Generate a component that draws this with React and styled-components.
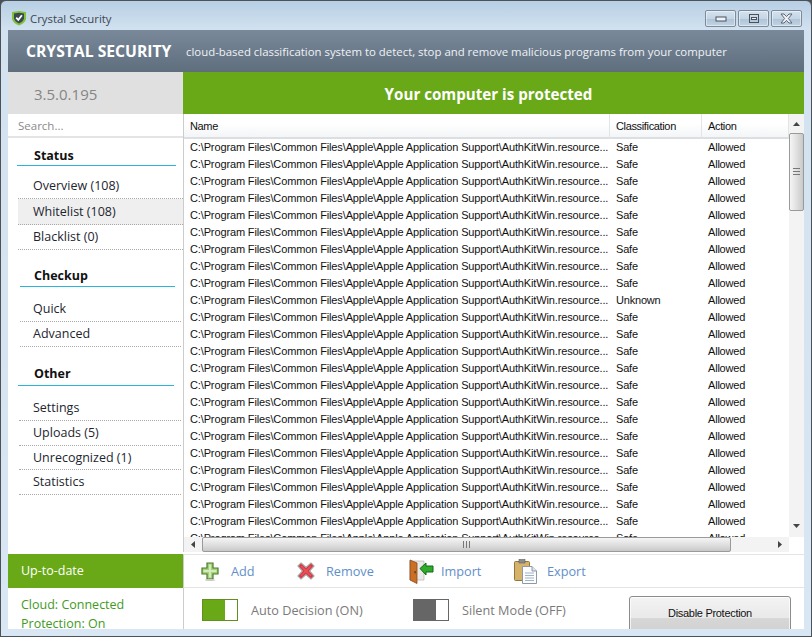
import React from 'react';
import styled, { createGlobalStyle } from 'styled-components';

const GlobalStyle = createGlobalStyle`
  html, body {
    margin: 0;
    padding: 0;
    background: #4a4f55;
  }
  * { box-sizing: border-box; }
`;

const uiFont = `"Open Sans", "Noto Sans", sans-serif`;
const listFont = `"Liberation Sans", Arial, sans-serif`;

const Window = styled.div`
  width: 812px;
  height: 637px;
  border: 1px solid #4d5257;
  border-radius: 6px 6px 0 0;
  background: linear-gradient(#b7cfe4 0, #d3e2f0 30px, #d9e6f3 100%);
  padding: 0 7px 7px;
  display: flex;
  flex-direction: column;
  overflow: hidden;
`;

const TitleBar = styled.div`
  height: 29px;
  flex: none;
  display: flex;
  align-items: center;
  padding: 5px 2px 0 3px;
  font: 11.4px ${uiFont};
  color: #3c4650;
`;

const TitleText = styled.span`
  margin-left: 3px;
  flex: 1;
`;

const WinButtons = styled.div`
  display: flex;
  gap: 2px;
  align-self: flex-start;
  margin-top: 4px;
`;

const WinButton = styled.div`
  width: ${p => p.$w}px;
  height: 17px;
  border: 1px solid #7d8b99;
  border-radius: 2px;
  background: linear-gradient(#d5e2ee 0, #c4d5e5 50%, #aec3d7 51%, #c1d4e5 100%);
  box-shadow: inset 0 0 0 1px rgba(255, 255, 255, .45);
  display: flex;
  align-items: center;
  justify-content: center;
`;

const Client = styled.div`
  height: 599px;
  background: #fff;
  display: flex;
  flex-direction: column;
  overflow: hidden;
`;

const Header = styled.div`
  height: 42px;
  flex: none;
  background: linear-gradient(#79899a, #5f6e7d);
  color: #fff;
  display: flex;
  align-items: center;
  padding: 0 0 0 18px;
  font-family: ${uiFont};
`;

const Brand = styled.div`
  font-size: 15.7px;
  font-weight: 700;
  width: 160px;
  white-space: nowrap;
`;

const Tagline = styled.div`
  font-size: 11.4px;
  color: #eef2f5;
  white-space: nowrap;
`;

const Body = styled.div`
  flex: 1;
  min-height: 0;
  display: grid;
  grid-template-columns: 175px 1fr;
`;

const Sidebar = styled.div`
  display: flex;
  flex-direction: column;
  font-family: ${uiFont};
  min-height: 0;
  overflow: hidden;
`;

const Version = styled.div`
  height: 42px;
  flex: none;
  background: #e0e0e0;
  color: #858585;
  font-size: 15px;
  line-height: 44px;
  padding-left: 26px;
`;

const Search = styled.div`
  height: 24px;
  flex: none;
  border-bottom: 2px solid #e4e4e4;
  color: #8a8a8a;
  font-size: 11.5px;
  line-height: 23px;
  padding-left: 10px;
`;

const Nav = styled.div`
  flex: 1;
`;

const SectionTitle = styled.div`
  box-sizing: content-box;
  height: ${p => p.$h - p.$top}px;
  margin: 0 ${p => p.$right}px 0 ${p => p.$left}px;
  padding: ${p => p.$top}px 0 0 ${p => 26 - p.$left}px;
  border-bottom: 1px solid #2cb5dc;
  font-size: 12.5px;
  font-weight: 700;
  line-height: 19px;
  color: #111;
`;

const ItemList = styled.div`
  margin: ${p => p.$gap}px ${p => p.$right}px 0 ${p => p.$left}px;
`;

const Item = styled.div`
  height: ${p => p.$h}px;
  padding-left: ${p => 25 - p.$left}px;
  border-bottom: 1px dotted #aaa;
  background: ${p => (p.$active ? '#efefef' : 'transparent')};
  color: #1d2530;
  font-size: 12.5px;
  line-height: ${p => p.$h - 1}px;
  white-space: nowrap;
`;

const UpToDate = styled.div`
  height: 34px;
  flex: none;
  background: #69a918;
  color: #fff;
  font-size: 12.5px;
  line-height: 34px;
  padding-left: 13px;
`;

const Cloud = styled.div`
  height: 41px;
  flex: none;
  overflow: hidden;
  padding: 7px 0 0 13px;
  color: #3f9a1e;
  font-size: 12.5px;
  line-height: 19px;
  white-space: nowrap;
`;

const Main = styled.div`
  display: flex;
  flex-direction: column;
  min-width: 0;
  min-height: 0;
`;

const Banner = styled.div`
  height: 42px;
  flex: none;
  background: #69a918;
  color: #fff;
  font: 700 15.15px/45px ${uiFont};
  text-align: center;
  padding-right: 10px;
`;

const ListArea = styled.div`
  flex: none;
  height: 438px;
  display: grid;
  grid-template-columns: 605px 15px;
  grid-template-rows: 423px 15px;
  border-left: 1px solid #ccc;
`;

const ListClip = styled.div`
  overflow: hidden;
  font: 11px ${listFont};
  color: #111;
`;

const Columns = styled.div`
  display: grid;
  grid-template-columns: 426px 92px 87px;
`;

const HeadRow = styled(Columns)`
  height: 25px;
  background: linear-gradient(#fff 0, #fff 40%, #f3f5f7 100%);
  border-bottom: 2px solid #dcdfe2;
  line-height: 24px;
  letter-spacing: -0.35px;
`;

const HeadCell = styled.div`
  padding-left: 6px;
  border-right: 1px solid #e2e4e6;
`;

const Row = styled(Columns)`
  height: 17px;
  line-height: 17px;
  white-space: nowrap;
`;

const Cell = styled.div`
  padding-left: 6px;
  overflow: hidden;
  letter-spacing: ${p => (p.$path ? '-0.13px' : '-0.2px')};
`;

const VBar = styled.div`
  grid-row: 1;
  grid-column: 2;
  background: #f3f3f3;
  display: flex;
  flex-direction: column;
  align-items: center;
`;

const HBar = styled.div`
  grid-row: 2;
  grid-column: 1;
  background: #f3f3f3;
  display: flex;
  align-items: center;
`;

const Corner = styled.div`
  grid-row: 2;
  grid-column: 2;
  background: #fff;
`;

const ArrowBox = styled.div`
  flex: none;
  width: ${p => p.$w}px;
  height: ${p => p.$h}px;
  display: flex;
  align-items: center;
  justify-content: center;
`;

const Thumb = styled.div`
  flex: none;
  width: ${p => p.$w}px;
  height: ${p => p.$h}px;
  border: 1px solid #9a9a9a;
  border-radius: 2px;
  display: flex;
  align-items: center;
  justify-content: center;
  background: ${p => (p.$vertical
    ? 'linear-gradient(90deg, #f5f5f5, #dedede 55%, #c9c9c9)'
    : 'linear-gradient(#f5f5f5, #dedede 55%, #c9c9c9)')};
`;

const BarSpacer = styled.div`
  flex: 1;
`;

const Toolbar = styled.div`
  height: 34px;
  flex: none;
  margin-top: 2px;
  border-top: 1px solid #e4e4e4;
  border-bottom: 1px solid #e4e4e4;
  border-left: 1px solid #ccc;
  display: flex;
  align-items: center;
  padding-left: 17px;
  font: 12.7px ${uiFont};
  color: #5f8fc8;
`;

const ToolItem = styled.div`
  width: ${p => p.$w}px;
  flex: none;
  display: flex;
  align-items: center;
`;

const ToolIcon = styled.div`
  width: ${p => p.$w}px;
  flex: none;
  display: flex;
`;

const Footer = styled.div`
  flex: 1;
  min-height: 0;
  border-left: 1px solid #ccc;
  display: flex;
  align-items: flex-start;
  padding: 11px 0 0 18px;
  font: 12.7px ${uiFont};
  color: #7a7a7a;
`;

const Toggle = styled.div`
  width: 36px;
  height: 22px;
  flex: none;
  border: 1px solid ${p => p.$color};
  background: linear-gradient(90deg, ${p => p.$fill} 66%, #fff 66%);
`;

const ToggleLabel = styled.div`
  width: ${p => p.$w}px;
  flex: none;
  padding-left: 13px;
  line-height: 22px;
  white-space: nowrap;
`;

const DisableButton = styled.div`
  width: 162px;
  height: 46px;
  flex: none;
  margin: -3px 0 0 3px;
  border: 1px solid #8c8c8c;
  border-radius: 3px;
  background: linear-gradient(#f3f3f3 0, #e9e9e9 48%, #d6d6d6 49%, #cfcfcf 100%);
  box-shadow: inset 0 0 0 1px rgba(255, 255, 255, .7);
  color: #111;
  font: 11px/32px ${listFont};
  letter-spacing: -0.3px;
  text-align: center;
`;

const ShieldIcon = () => (
  <svg width="16" height="16" viewBox="0 0 16 16">
    <path d="M1 2 L8 1 L15 2 L15 9 Q14 13 8 15.5 Q2 13 1 9 Z" fill="#7fc23c" />
    <path d="M3 3.5 L8 2.8 L13 3.5 L13 8.6 Q12 12 8 13.6 Q4 12 3 8.6 Z" fill="#3d4750" />
    <path d="M5.2 7.6 L7.3 9.8 L10.9 5.2" fill="none" stroke="#fff" strokeWidth="1.8" />
  </svg>
);

const MinGlyph = () => (
  <svg width="12" height="6" viewBox="0 0 12 6">
    <rect x="1" y="1" width="10" height="4" fill="#eef3f8" stroke="#48535e" />
  </svg>
);

const MaxGlyph = () => (
  <svg width="10" height="9" viewBox="0 0 10 9">
    <rect x="0.5" y="0.5" width="9" height="8" fill="none" stroke="#48535e" />
    <rect x="2.5" y="3.5" width="5" height="2" fill="#eef3f8" stroke="#48535e" />
  </svg>
);

const CloseGlyph = () => (
  <svg width="15" height="11" viewBox="0 0 15 11">
    <path d="M2 1 H5 L7.5 3.6 L10 1 H13 L9.4 5.5 L13 10 H10 L7.5 7.4 L5 10 H2 L5.6 5.5 Z" fill="#eef3f8" stroke="#5b6772" strokeWidth="1" />
  </svg>
);

const Arrow = ({ dir }) => {
  const points = {
    up: '0,4 3.5,0 7,4',
    down: '0,0 7,0 3.5,4',
    left: '4,0 4,7 0,3.5',
    right: '0,0 4,3.5 0,7'
  }[dir];
  const flat = dir === 'up' || dir === 'down';
  return (
    <svg width={flat ? 7 : 4} height={flat ? 4 : 7}>
      <polygon points={points} fill="#444" />
    </svg>
  );
};

const Grip = ({ vertical }) => (
  <svg width={vertical ? 7 : 8} height={vertical ? 8 : 7}>
    {[0, 3, 6].map(n => (vertical
      ? <rect key={n} x="0" y={n} width="7" height="1" fill="#777" />
      : <rect key={n} x={n} y="0" width="1" height="7" fill="#777" />))}
  </svg>
);

const AddIcon = () => (
  <svg width="18" height="19" viewBox="0 0 18 19">
    <path d="M6 1 H12 V6 H17 V12 H12 V17 H6 V12 H1 V6 H6 Z" fill="#a4d07c" stroke="#4d7a2a" strokeWidth="1.2" />
    <path d="M8 2.5 H10 V8 H15.5 V10 H10 V15.5 H8 V10 H2.5 V8 H8 Z" fill="#d3edba" />
    <ellipse cx="9" cy="18" rx="5" ry="1" fill="#ccc" />
  </svg>
);

const RemoveIcon = () => (
  <svg width="18" height="18" viewBox="0 0 18 18">
    <path d="M4 1 L9 5.5 L14 1 L17 4 L12.5 9 L17 14 L14 17 L9 12.5 L4 17 L1 14 L5.5 9 L1 4 Z" fill="#d9333b" stroke="#a9a0a0" strokeWidth="1.2" />
    <path d="M4.5 3.5 L9 7.5 L13.5 3.5 L14.5 4.5 L10.5 9 L14.5 13.5 L13.5 14.5 L9 10.5 L4.5 14.5 L3.5 13.5 L7.5 9 L3.5 4.5 Z" fill="#e8505a" />
  </svg>
);

const ImportIcon = () => (
  <svg width="25" height="25" viewBox="0 0 25 25">
    <path d="M1 2 H15 V21 H1 Z" fill="#e9e9e7" stroke="#aaa" strokeWidth="0.6" />
    <path d="M1 1 L8 4 V24.5 L1 21 Z" fill="#c96f26" stroke="#8a4a18" strokeWidth="0.8" />
    <rect x="5.5" y="12" width="1.2" height="2.4" fill="#5a3210" />
    <path d="M11 9.5 L17 4 V7 H24 V13 H17 V16 Z" fill="#2faa2a" stroke="#0d6b12" strokeWidth="1" />
  </svg>
);

const ExportIcon = () => (
  <svg width="23" height="25" viewBox="0 0 23 25">
    <rect x="0.5" y="2.5" width="15" height="19" rx="1" fill="#d6b36a" stroke="#94753a" />
    <rect x="5" y="0.5" width="6" height="3.5" fill="#8a8d90" stroke="#5c5e60" strokeWidth="0.6" />
    <path d="M8.5 7.5 H18 L22.5 12 V24.5 H8.5 Z" fill="#fdfdfd" stroke="#8e99a6" />
    <path d="M18 7.5 V12 H22.5" fill="#dfe6ee" stroke="#8e99a6" />
    <path d="M11 14 H20 M11 16.5 H20 M11 19 H20 M11 21.5 H20" stroke="#9fb3cc" />
  </svg>
);

const path = 'C:\\Program Files\\Common Files\\Apple\\Apple Application Support\\AuthKitWin.resource...';
const rows = Array.from({ length: 24 }, (_, i) => (i === 9 ? 'Unknown' : 'Safe'));

const sections = [
  {
    title: 'Status', top: 8, height: 27, left: 9, right: 7, gap: 8, inset: 10, insetRight: 0,
    items: [['Overview (108)', 25], ['Whitelist (108)', 26, true], ['Blacklist (0)', 25]]
  },
  {
    title: 'Checkup', top: 16, height: 36, left: 12, right: 8, gap: 10, inset: 12, insetRight: 2,
    items: [['Quick', 25], ['Advanced', 25]]
  },
  {
    title: 'Other', top: 17, height: 38, left: 10, right: 9, gap: 10, inset: 11, insetRight: 2,
    items: [['Settings', 25], ['Uploads (5)', 25], ['Unrecognized (1)', 24], ['Statistics', 25]]
  }
];

const tools = [
  { label: 'Add', icon: <AddIcon />, slot: 96, iconW: 30 },
  { label: 'Remove', icon: <RemoveIcon />, slot: 112, iconW: 29 },
  { label: 'Import', icon: <ImportIcon />, slot: 105, iconW: 32 },
  { label: 'Export', icon: <ExportIcon />, slot: 100, iconW: 33 }
];

export default function App() {
  return (
    <>
      <GlobalStyle />
      <Window>
        <TitleBar>
          <ShieldIcon />
          <TitleText>Crystal Security</TitleText>
          <WinButtons>
            <WinButton $w={31}><MinGlyph /></WinButton>
            <WinButton $w={31}><MaxGlyph /></WinButton>
            <WinButton $w={31}><CloseGlyph /></WinButton>
          </WinButtons>
        </TitleBar>
        <Client>
          <Header>
            <Brand>CRYSTAL SECURITY</Brand>
            <Tagline>cloud-based classification system to detect, stop and remove malicious programs from your computer</Tagline>
          </Header>
          <Body>
            <Sidebar>
              <Version>3.5.0.195</Version>
              <Search>Search...</Search>
              <Nav>
                {sections.map(s => (
                  <div key={s.title}>
                    <SectionTitle $top={s.top} $h={s.height} $left={s.left} $right={s.right}>{s.title}</SectionTitle>
                    <ItemList $gap={s.gap} $left={s.inset} $right={s.insetRight}>
                      {s.items.map(([label, h, active]) => (
                        <Item key={label} $h={h} $left={s.inset} $active={active}>{label}</Item>
                      ))}
                    </ItemList>
                  </div>
                ))}
              </Nav>
              <UpToDate>Up-to-date</UpToDate>
              <Cloud>
                <div>Cloud: Connected</div>
                <div>Protection: On</div>
              </Cloud>
            </Sidebar>
            <Main>
              <Banner>Your computer is protected</Banner>
              <ListArea>
                <ListClip>
                  <HeadRow>
                    <HeadCell>Name</HeadCell>
                    <HeadCell>Classification</HeadCell>
                    <HeadCell>Action</HeadCell>
                  </HeadRow>
                  {rows.map((kind, i) => (
                    <Row key={i}>
                      <Cell $path>{path}</Cell>
                      <Cell>{kind}</Cell>
                      <Cell>Allowed</Cell>
                    </Row>
                  ))}
                </ListClip>
                <VBar>
                  <ArrowBox $w={15} $h={19}><Arrow dir="up" /></ArrowBox>
                  <Thumb $vertical $w={15} $h={78}><Grip vertical /></Thumb>
                  <BarSpacer />
                  <ArrowBox $w={15} $h={23}><Arrow dir="down" /></ArrowBox>
                </VBar>
                <HBar>
                  <ArrowBox $w={18} $h={15}><Arrow dir="left" /></ArrowBox>
                  <Thumb $w={529} $h={15}><Grip /></Thumb>
                  <BarSpacer />
                  <ArrowBox $w={18} $h={15}><Arrow dir="right" /></ArrowBox>
                </HBar>
                <Corner />
              </ListArea>
              <Toolbar>
                {tools.map(t => (
                  <ToolItem key={t.label} $w={t.slot}>
                    <ToolIcon $w={t.iconW}>{t.icon}</ToolIcon>
                    {t.label}
                  </ToolItem>
                ))}
              </Toolbar>
              <Footer>
                <Toggle $color="#5f8f1e" $fill="#69a918" />
                <ToggleLabel $w={175}>Auto Decision (ON)</ToggleLabel>
                <Toggle $color="#666" $fill="#666" />
                <ToggleLabel $w={177}>Silent Mode (OFF)</ToggleLabel>
                <DisableButton>Disable Protection</DisableButton>
              </Footer>
            </Main>
          </Body>
        </Client>
      </Window>
    </>
  );
}
